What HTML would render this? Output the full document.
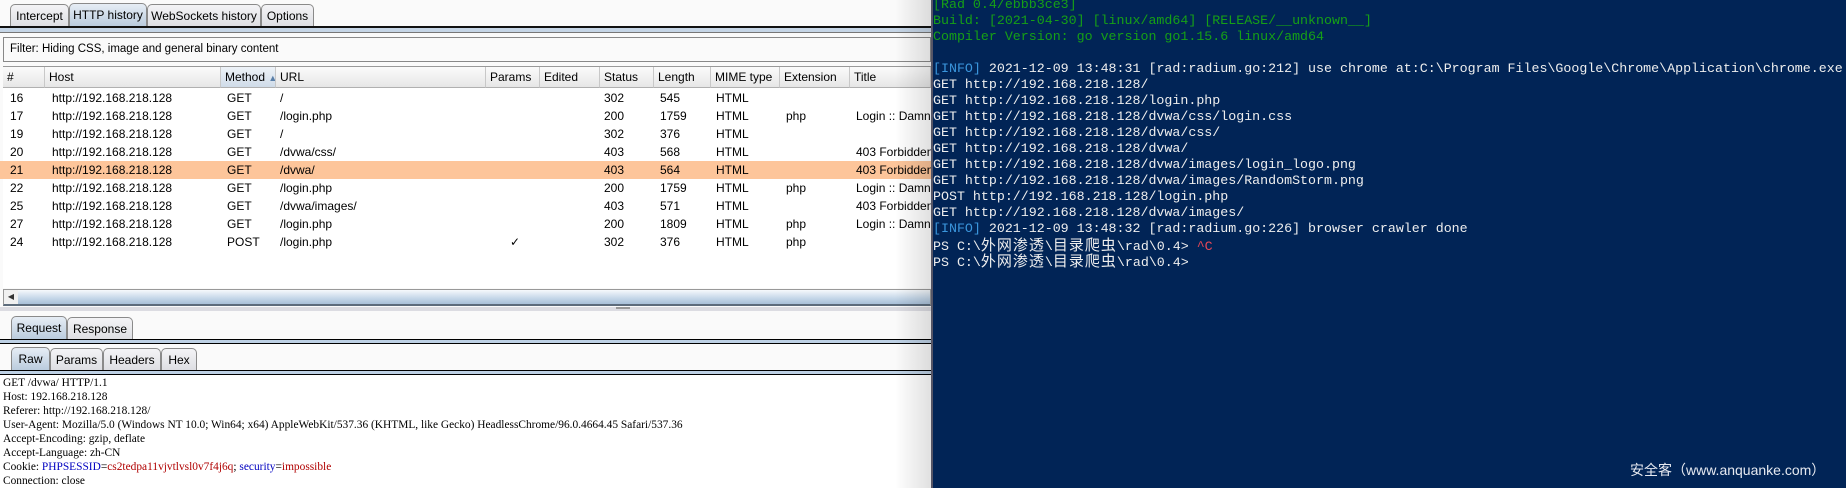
<!DOCTYPE html>
<html><head><meta charset="utf-8"><style>
*{margin:0;padding:0;box-sizing:border-box}
body{width:1846px;height:488px;overflow:hidden;position:relative;background:#fff;font-family:"Liberation Sans",Arial,sans-serif;font-size:12px;color:#000}
.a{position:absolute;white-space:nowrap}
.tab{position:absolute;border:1px solid #8a8a8a;border-bottom:none;border-radius:5px 5px 0 0;background:linear-gradient(#f4f4f6,#dcdde2);text-align:center;font-size:12px;white-space:nowrap}
.tab.sel{background:linear-gradient(#e6edf5,#b8cadc)}
.hdr{position:absolute;top:67px;height:21px;background:linear-gradient(#fbfbfb,#e6e6e6);border-right:1px solid #c8c8c8;border-bottom:1px solid #b0b0b0;font-size:12px;line-height:21px;padding-left:4px;white-space:nowrap;overflow:hidden}
.row{position:absolute;left:0;width:931px;height:18px;line-height:18px;font-size:12px;white-space:nowrap}
.row span{position:absolute;white-space:nowrap}
.term{position:absolute;left:931px;top:0;width:915px;height:488px;background:#012456;border-left:2px solid #556;font-family:"Liberation Mono","WenQuanYi Zen Hei",monospace;font-size:13.3px;color:#eee;line-height:16px}
.term div{white-space:pre;height:16px}
.g{color:#16a016}.b{color:#3a96dd}.r{color:#e74856}
.cj{font-family:"WenQuanYi Zen Hei","Noto Sans CJK SC",monospace;font-size:15px;letter-spacing:1px}
.req{position:absolute;left:3px;top:376px;font-family:"Liberation Serif",serif;font-size:11.4px;line-height:14px;white-space:pre}
</style></head><body>
<div class="a" style="left:0;top:0;width:931px;height:488px;background:#fafafa"></div>
<div class="tab" style="left:10px;top:4px;width:59px;height:23px;line-height:22px">Intercept</div>
<div class="tab sel" style="left:69px;top:3px;width:78px;height:24px;line-height:22px">HTTP history</div>
<div class="tab" style="left:147px;top:4px;width:114px;height:23px;line-height:22px">WebSockets history</div>
<div class="tab" style="left:261px;top:4px;width:53px;height:23px;line-height:22px">Options</div>
<div class="a" style="left:0;top:26px;width:931px;height:2px;background:#111"></div>
<div class="a" style="left:0;top:28px;width:931px;height:4px;background:#c5d5e6"></div>
<div class="a" style="left:0;top:32px;width:931px;height:1px;background:#777"></div>
<div class="a" style="left:3px;top:37px;width:928px;height:25px;border:1px solid #888;background:#fafafa;line-height:23px;padding-left:6px;font-size:11.5px">Filter: Hiding CSS, image and general binary content</div>
<div class="a" style="left:3px;top:66px;width:928px;height:1px;background:#999"></div>
<div class="a" style="left:3px;top:88px;width:928px;height:200px;background:#fff"></div>
<div class="hdr" style="left:3px;width:42px">#</div>
<div class="hdr" style="left:45px;width:176px">Host</div>
<div class="hdr" style="left:221px;width:55px;background:linear-gradient(#eef3f8,#cfdbe8)">Method <span style="color:#5a7fa8;font-size:9px">▲</span></div>
<div class="hdr" style="left:276px;width:210px">URL</div>
<div class="hdr" style="left:486px;width:54px">Params</div>
<div class="hdr" style="left:540px;width:60px">Edited</div>
<div class="hdr" style="left:600px;width:54px">Status</div>
<div class="hdr" style="left:654px;width:57px">Length</div>
<div class="hdr" style="left:711px;width:69px">MIME type</div>
<div class="hdr" style="left:780px;width:70px">Extension</div>
<div class="hdr" style="left:850px;width:81px">Title</div>

<div class="row" style="top:89px"><span style="left:10px">16</span><span style="left:52px">http://192.168.218.128</span><span style="left:227px">GET</span><span style="left:280px">/</span><span style="left:604px">302</span><span style="left:660px">545</span><span style="left:716px">HTML</span></div>
<div class="row" style="top:107px"><span style="left:10px">17</span><span style="left:52px">http://192.168.218.128</span><span style="left:227px">GET</span><span style="left:280px">/login.php</span><span style="left:604px">200</span><span style="left:660px">1759</span><span style="left:716px">HTML</span><span style="left:786px">php</span><span style="left:856px">Login :: Damn V</span></div>
<div class="row" style="top:125px"><span style="left:10px">19</span><span style="left:52px">http://192.168.218.128</span><span style="left:227px">GET</span><span style="left:280px">/</span><span style="left:604px">302</span><span style="left:660px">376</span><span style="left:716px">HTML</span></div>
<div class="row" style="top:143px"><span style="left:10px">20</span><span style="left:52px">http://192.168.218.128</span><span style="left:227px">GET</span><span style="left:280px">/dvwa/css/</span><span style="left:604px">403</span><span style="left:660px">568</span><span style="left:716px">HTML</span><span style="left:856px">403 Forbidden</span></div>
<div class="row" style="top:161px;background:#fdc59a"><span style="left:10px">21</span><span style="left:52px">http://192.168.218.128</span><span style="left:227px">GET</span><span style="left:280px">/dvwa/</span><span style="left:604px">403</span><span style="left:660px">564</span><span style="left:716px">HTML</span><span style="left:856px">403 Forbidden</span></div>
<div class="row" style="top:179px"><span style="left:10px">22</span><span style="left:52px">http://192.168.218.128</span><span style="left:227px">GET</span><span style="left:280px">/login.php</span><span style="left:604px">200</span><span style="left:660px">1759</span><span style="left:716px">HTML</span><span style="left:786px">php</span><span style="left:856px">Login :: Damn V</span></div>
<div class="row" style="top:197px"><span style="left:10px">25</span><span style="left:52px">http://192.168.218.128</span><span style="left:227px">GET</span><span style="left:280px">/dvwa/images/</span><span style="left:604px">403</span><span style="left:660px">571</span><span style="left:716px">HTML</span><span style="left:856px">403 Forbidden</span></div>
<div class="row" style="top:215px"><span style="left:10px">27</span><span style="left:52px">http://192.168.218.128</span><span style="left:227px">GET</span><span style="left:280px">/login.php</span><span style="left:604px">200</span><span style="left:660px">1809</span><span style="left:716px">HTML</span><span style="left:786px">php</span><span style="left:856px">Login :: Damn V</span></div>
<div class="row" style="top:233px"><span style="left:10px">24</span><span style="left:52px">http://192.168.218.128</span><span style="left:227px">POST</span><span style="left:280px">/login.php</span><span style="left:510px">✓</span><span style="left:604px">302</span><span style="left:660px">376</span><span style="left:716px">HTML</span><span style="left:786px">php</span></div>

<div class="a" style="left:3px;top:289px;width:928px;height:17px;border:1px solid #999;background:linear-gradient(#f6f9fc,#c4d6e8 60%,#a9c0d8);border-bottom:2px solid #5d6c7c"></div>
<div class="a" style="left:4px;top:290px;width:14px;height:14px;background:#f0f0f0;font-size:8px;line-height:14px;text-align:center;color:#333">◀</div>
<div class="a" style="left:0;top:307px;width:931px;height:4px;background:#dcdce2"></div>
<div class="a" style="left:616px;top:307px;width:14px;height:2px;background:#999"></div>

<div class="tab sel" style="left:11px;top:316px;width:56px;height:24px;line-height:23px">Request</div>
<div class="tab" style="left:67px;top:317px;width:66px;height:23px;line-height:22px">Response</div>
<div class="a" style="left:0;top:339px;width:931px;height:1px;background:#000"></div>
<div class="a" style="left:0;top:340px;width:931px;height:3px;background:#bdd0e4"></div>
<div class="a" style="left:0;top:343px;width:931px;height:1px;background:#000"></div>
<div class="tab sel" style="left:11px;top:347px;width:39px;height:24px;line-height:23px">Raw</div>
<div class="tab" style="left:50px;top:348px;width:53px;height:23px;line-height:22px">Params</div>
<div class="tab" style="left:103px;top:348px;width:58px;height:23px;line-height:22px">Headers</div>
<div class="tab" style="left:161px;top:348px;width:36px;height:23px;line-height:22px">Hex</div>
<div class="a" style="left:0;top:370px;width:931px;height:1px;background:#000"></div>
<div class="a" style="left:0;top:371px;width:931px;height:3px;background:#bdd0e4"></div>
<div class="a" style="left:0;top:374px;width:931px;height:1px;background:#000"></div>
<div class="a" style="left:0;top:375px;width:931px;height:113px;background:#fff"></div>
<div class="req">GET /dvwa/ HTTP/1.1
Host: 192.168.218.128
Referer: http://192.168.218.128/
User-Agent: Mozilla/5.0 (Windows NT 10.0; Win64; x64) AppleWebKit/537.36 (KHTML, like Gecko) HeadlessChrome/96.0.4664.45 Safari/537.36
Accept-Encoding: gzip, deflate
Accept-Language: zh-CN
Cookie: <span style="color:#0000c0">PHPSESSID</span>=<span style="color:#b00000">cs2tedpa11vjvtlvsl0v7f4j6q</span>; <span style="color:#0000c0">security</span>=<span style="color:#b00000">impossible</span>
Connection: close</div>
<div class="a" style="left:895px;top:0;width:36px;height:488px;background:linear-gradient(90deg,rgba(0,0,0,0),rgba(0,0,0,0.12))"></div>

<div class="term"><div style="margin-top:-3px" class="g">[Rad 0.4/ebbb3ce3]</div><div class="g">Build: [2021-04-30] [linux/amd64] [RELEASE/__unknown__]</div><div class="g">Compiler Version: go version go1.15.6 linux/amd64</div><div> </div><div><span class="b">[INFO]</span> 2021-12-09 13:48:31 [rad:radium.go:212] use chrome at:C:\Program Files\Google\Chrome\Application\chrome.exe</div><div>GET http://192.168.218.128/</div><div>GET http://192.168.218.128/login.php</div><div>GET http://192.168.218.128/dvwa/css/login.css</div><div>GET http://192.168.218.128/dvwa/css/</div><div>GET http://192.168.218.128/dvwa/</div><div>GET http://192.168.218.128/dvwa/images/login_logo.png</div><div>GET http://192.168.218.128/dvwa/images/RandomStorm.png</div><div>POST http://192.168.218.128/login.php</div><div>GET http://192.168.218.128/dvwa/images/</div><div><span class="b">[INFO]</span> 2021-12-09 13:48:32 [rad:radium.go:226] browser crawler done</div><div>PS C:\<span class="cj">外网渗透</span>\<span class="cj">目录爬虫</span>\rad\0.4&gt; <span class="r">^C</span></div><div>PS C:\<span class="cj">外网渗透</span>\<span class="cj">目录爬虫</span>\rad\0.4&gt;</div></div>
<div class="a" style="left:1630px;top:460px;font-family:'Liberation Sans','Noto Sans CJK SC',sans-serif;font-size:14px;color:#e6e9f0">安全客（www.anquanke.com）</div>
</body></html>
